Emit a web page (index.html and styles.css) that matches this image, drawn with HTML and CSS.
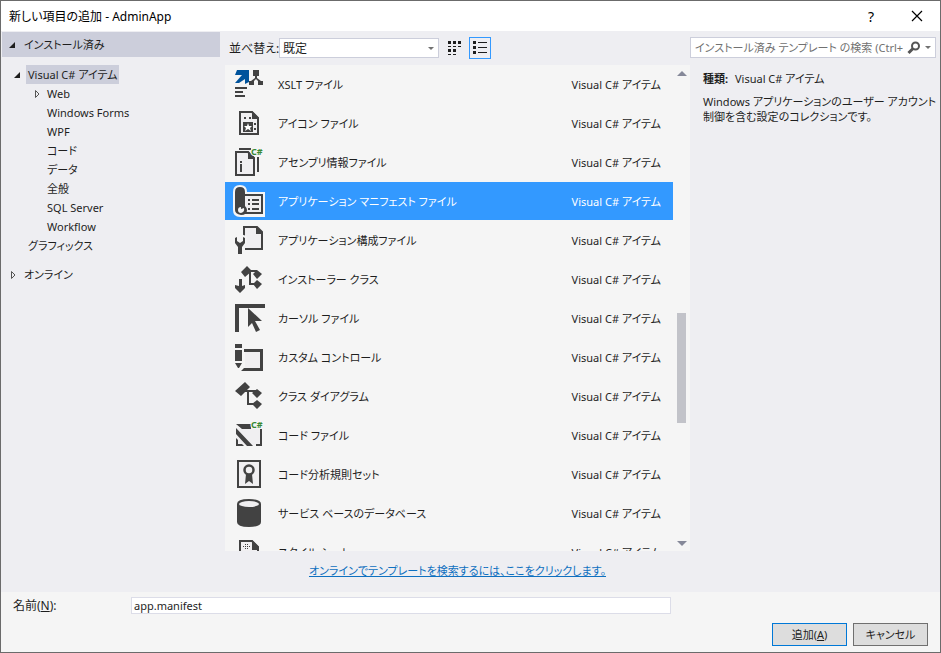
FILE: index.html
```html
<!DOCTYPE html>
<html lang="ja">

<head>
    <meta charset="UTF-8">
    <meta name="viewport" content="width=device-width, initial-scale=1.0">
    <title>新しい項目の追加 - AdminApp</title>
    <link rel="stylesheet" href="styles.css">
</head>

<body>
    <div class="dialog">
        <header class="titlebar">
            <h1>新しい項目の追加 - AdminApp</h1>
            <button type="button" class="title-btn" aria-label="ヘルプ">?</button>
            <button type="button" class="title-btn" aria-label="閉じる">
                <svg width="12" height="12" viewBox="0 0 12 12"><path d="M1 1l10 10M11 1L1 11" stroke="#000" stroke-width="1.2" fill="none"/></svg>
            </button>
        </header>

        <div class="main">
            <!-- Category tree -->
            <nav class="sidebar">
                <div class="group active">
                    <svg class="arrow" viewBox="0 0 8 8"><path d="M7 1v6H1z" fill="#1e1e1e"/></svg>
                    <span>インストール済み</span>
                </div>
                <ul class="tree">
                    <li class="level1">
                        <svg class="arrow" viewBox="0 0 8 8"><path d="M7 1v6H1z" fill="#1e1e1e"/></svg>
                        <span class="selected">Visual C# アイテム</span>
                    </li>
                    <li class="level2">
                        <svg class="arrow" viewBox="0 0 8 8"><path d="M3.5 0.5v7L7 4z" fill="none" stroke="#555"/></svg>
                        <span>Web</span>
                    </li>
                    <li class="level2"><span>Windows Forms</span></li>
                    <li class="level2"><span>WPF</span></li>
                    <li class="level2"><span>コード</span></li>
                    <li class="level2"><span>データ</span></li>
                    <li class="level2"><span>全般</span></li>
                    <li class="level2"><span>SQL Server</span></li>
                    <li class="level2"><span>Workflow</span></li>
                    <li class="level1"><span>グラフィックス</span></li>
                </ul>
                <div class="group">
                    <svg class="arrow" viewBox="0 0 8 8"><path d="M3.5 0.5v7L7 4z" fill="none" stroke="#555"/></svg>
                    <span>オンライン</span>
                </div>
            </nav>

            <!-- Templates -->
            <section class="templates">
                <div class="toolbar">
                    <label for="sort">並べ替え:</label>
                    <div class="select-box">
                        <select id="sort">
                            <option>既定</option>
                        </select>
                    </div>
                    <button type="button" class="view-btn" aria-label="小さいアイコン">
                        <svg width="14" height="14" viewBox="0 0 14 14" fill="#1e1e1e"><path d="M0 0h3v3H0zM5 0h3v3H5zM10 0h3v3h-3zM0 5h3v1H0zM5 5h3v1H5zM10 5h3v1h-3zM0 8h3v3H0zM5 8h3v3H5zM0 13h3v1H0zM5 13h3v1H5z"/></svg>
                    </button>
                    <button type="button" class="view-btn current" aria-label="一覧">
                        <svg width="14" height="14" viewBox="0 0 14 14" fill="#1e1e1e"><path d="M0 0h3v3H0zM0 5h3v3H0zM0 10h3v3H0zM5 1h9v1H5zM5 6h9v1H5zM5 11h9v1H5z"/></svg>
                    </button>
                </div>

                <div class="list-area">
                    <ul class="list">
                        <li>
                            <svg class="icon" viewBox="0 0 32 32">
                                <path d="M4 2h12v12l-4 2v-5l-6 4H2l7-8H2z" fill="#00539c"/>
                                <path d="M20 2h6v6h-2v2l4 3h2v4h-5v-4l-2-2-2 2v4h-5v-4h2l4-3V8h-2zM2 19h12v2H2zM2 23h8v2H2zM2 27h10v2H2z"/>
                            </svg>
                            <span class="name">XSLT ファイル</span>
                            <span class="kind">Visual C# アイテム</span>
                        </li>
                        <li>
                            <svg class="icon" viewBox="0 0 32 32">
                                <path d="M7 5h12l6 6v16H7z" fill="#f0eff1" stroke="#424242" stroke-width="2"/>
                                <path d="M19 4l7 7v1h-7zM11 10h2v2h-2zM16 10h2v2h-2zM10 15h10v10H10zM21 16h2v2h-2zM21 21h2v2h-2z"/>
                                <path d="M15 16l1 3h3l-2 2 1 3-3-2-3 2 1-3-2-2h3z" fill="#fff"/>
                            </svg>
                            <span class="name">アイコン ファイル</span>
                            <span class="kind">Visual C# アイテム</span>
                        </li>
                        <li>
                            <svg class="icon" viewBox="0 0 32 32">
                                <path d="M3 6h12l6 6v17H3z" fill="#f0eff1" stroke="#424242" stroke-width="2"/>
                                <path d="M15 5l7 7v1h-7zM7 15h2v2H7zM7 18h2v8H7zM6 2h12v2H6zM24 11h2v15h-2z"/>
                                <text x="18" y="9" class="cs">C#</text>
                            </svg>
                            <span class="name">アセンブリ情報ファイル</span>
                            <span class="kind">Visual C# アイテム</span>
                        </li>
                        <li class="selected">
                            <svg class="icon" viewBox="0 0 32 32">
                                <path d="M0 25V7Q0 0 7 0t7 7h18v25H7Q0 32 0 25z" fill="#f5f5f5"/>
                                <path d="M12 10h17v18H9" fill="#f0eff1" stroke="#424242" stroke-width="2"/>
                                <path d="M2 25V7q0-5 5-5t5 5v14q2 2 2 4 0 5-6 5-6-1-6-5z"/>
                                <path d="M5 25q0-3 3-3v2l3-1q1 4-3 5-3 0-3-3z" fill="#f5f5f5"/>
                                <path d="M15 14h2v2h-2zM19 14h7v2h-7zM15 18h2v2h-2zM19 18h7v2h-7zM15 23h2v2h-2zM19 23h7v2h-7z"/>
                            </svg>
                            <span class="name">アプリケーション マニフェスト ファイル</span>
                            <span class="kind">Visual C# アイテム</span>
                        </li>
                        <li>
                            <svg class="icon" viewBox="0 0 32 32">
                                <path d="M11 16V3h13l5 5v17H12" fill="#f0eff1" stroke="#424242" stroke-width="2"/>
                                <path d="M23 2l7 7v1h-7z"/>
                                <path d="M2 13l3-1v5l2 1 2-1v-5l3 1v6l-3 4v7H5v-7l-3-4z" stroke="#f5f5f5" stroke-width="3"/>
                                <path d="M2 14l2-1v4l3 2 3-2v-4l2 1v5l-3 4v7H5v-7l-3-4z"/>
                            </svg>
                            <span class="name">アプリケーション構成ファイル</span>
                            <span class="kind">Visual C# アイテム</span>
                        </li>
                        <li>
                            <svg class="icon" viewBox="0 0 32 32">
                                <path d="M14 3l5 5-7 6-4-5zM24 7l5 4-5 5-4-5zM24 17l5 4-5 5-4-5z"/>
                                <path d="M16 8h8M17 9v12h6" fill="none" stroke="#424242" stroke-width="2"/>
                                <path d="M6 16h3v7l3-1v3l-5 5-5-5v-3l4 1z"/>
                            </svg>
                            <span class="name">インストーラー クラス</span>
                            <span class="kind">Visual C# アイテム</span>
                        </li>
                        <li>
                            <svg class="icon" viewBox="0 0 32 32">
                                <path d="M2 2h30v4H6v24H2z"/>
                                <path d="M15 6l14 13h-7l5 9-4 2-4-9-4 4z"/>
                            </svg>
                            <span class="name">カーソル ファイル</span>
                            <span class="kind">Visual C# アイテム</span>
                        </li>
                        <li>
                            <svg class="icon" viewBox="0 0 32 32">
                                <path d="M12 9h16v19H12z" fill="#f0eff1"/>
                                <path d="M2 3h7v4H2zM2 9h7v11H2zM2 22h7l-3 5H5zM11 8h19v22H8l3-3h16V11H11z"/>
                            </svg>
                            <span class="name">カスタム コントロール</span>
                            <span class="kind">Visual C# アイテム</span>
                        </li>
                        <li>
                            <svg class="icon" viewBox="0 0 32 32">
                                <path d="M12 2l5 5-9 9-6-5zM24 9l5 4-5 5-5-5zM24 20l5 4-5 5-5-5z"/>
                                <path d="M12 11h11M15 11v13h6" fill="none" stroke="#424242" stroke-width="2"/>
                            </svg>
                            <span class="name">クラス ダイアグラム</span>
                            <span class="kind">Visual C# アイテム</span>
                        </li>
                        <li>
                            <svg class="icon" viewBox="0 0 32 32">
                                <path d="M4 9h24v17H4z" fill="#f0eff1"/>
                                <path d="M3 5h15v5H9zM3 9l17 18h-6L3 15zM3 19l2 2v4h4l2 2H3zM27 10h2v17h-6v-2h4z"/>
                                <text x="18" y="9" class="cs">C#</text>
                            </svg>
                            <span class="name">コード ファイル</span>
                            <span class="kind">Visual C# アイテム</span>
                        </li>
                        <li>
                            <svg class="icon" viewBox="0 0 32 32">
                                <path d="M5 3h22v26H5z" fill="#f0eff1" stroke="#424242" stroke-width="2"/>
                                <path d="M13 16h6l1 10-4-3-4 3z"/>
                                <circle cx="16" cy="12" r="4.5" fill="#f0eff1" stroke="#424242" stroke-width="2.5"/>
                            </svg>
                            <span class="name">コード分析規則セット</span>
                            <span class="kind">Visual C# アイテム</span>
                        </li>
                        <li>
                            <svg class="icon" viewBox="0 0 32 32">
                                <path d="M4 7q0-5 12-5t12 5v18q0 5-12 5T4 25z"/>
                                <ellipse cx="16" cy="7" rx="10" ry="3" fill="#f0eff1"/>
                            </svg>
                            <span class="name">サービス ベースのデータベース</span>
                            <span class="kind">Visual C# アイテム</span>
                        </li>
                        <li>
                            <svg class="icon" viewBox="0 0 32 32">
                                <path d="M7 5h12l6 6v16H7z" fill="#f0eff1" stroke="#424242" stroke-width="2"/>
                                <path d="M19 4l7 7v3h-7zM10 10h1v1h-1zM12 10h1v1h-1zM14 10h1v1h-1zM16 10h1v1h-1zM12 8h1v1h-1zM14 8h1v1h-1zM12 12h1v1h-1zM14 12h1v1h-1z"/>
                            </svg>
                            <span class="name">スタイル シート</span>
                            <span class="kind">Visual C# アイテム</span>
                        </li>
                    </ul>
                    <div class="scrollbar">
                        <div class="up"></div>
                        <div class="before"></div>
                        <div class="thumb"></div>
                        <div class="after"></div>
                        <div class="down"></div>
                    </div>
                </div>

                <p class="online"><a href="#">オンラインでテンプレートを検索するには、ここをクリックします。</a></p>
            </section>

            <!-- Details -->
            <aside class="details">
                <div class="search">
                    <input type="text" aria-label="検索" placeholder="インストール済み テンプレート の検索 (Ctrl+E)">
                    <button type="button" aria-label="検索">
                        <svg width="14" height="14" viewBox="0 0 14 14"><circle cx="8.5" cy="5" r="3.5" fill="none" stroke="#555" stroke-width="2"/><path d="M6 7.5L1.5 12" stroke="#555" stroke-width="3"/></svg>
                    </button>
                    <button type="button" aria-label="検索オプション">
                        <svg width="6" height="4" viewBox="0 0 6 4"><path d="M0 0h6L3 3z" fill="#717171"/></svg>
                    </button>
                </div>
                <div class="info">
                    <p><b>種類:</b> Visual C# アイテム</p>
                    <p class="text">Windows アプリケーションのユーザー アカウント<br>制御を含む設定のコレクションです。</p>
                </div>
            </aside>
        </div>

        <footer class="footer">
            <div class="name-row">
                <label for="name">名前(<u>N</u>):</label>
                <input type="text" id="name" value="app.manifest">
            </div>
            <div class="buttons">
                <button type="button" class="default">追加(<u>A</u>)</button>
                <button type="button">キャンセル</button>
            </div>
        </footer>
    </div>
</body>

</html>
```
FILE: styles.css
```css
* {
    margin: 0;
    padding: 0;
    box-sizing: border-box;
}

body {
    font-family: "Noto Sans", "Noto Sans CJK JP", sans-serif;
    font-size: 11px;
    line-height: 19px;
    font-feature-settings: "palt";
    color: #1e1e1e;
}

button,
input,
select {
    font: inherit;
    font-feature-settings: inherit;
    color: inherit;
}

ul {
    list-style: none;
}

.dialog {
    display: flex;
    flex-direction: column;
    height: 100vh;
    border: 1px solid #6b6b6b;
    background: #eeeef2;
}

/* Title bar */
.titlebar {
    display: flex;
    align-items: center;
    height: 30px;
    padding-left: 8px;
    background: #fff;
    color: #000;
}

.titlebar h1 {
    flex: 1;
    font-size: 12px;
    font-weight: normal;
}

.title-btn {
    width: 46px;
    height: 30px;
    border: none;
    background: none;
    font-size: 14px;
}

.main {
    display: grid;
    grid-template-columns: 219px 1fr 250px;
    grid-template-rows: minmax(0, 1fr);
    flex: 1;
    min-height: 0;
}

/* Sidebar */
.sidebar {
    padding: 1px 0 0 1px;
}

.group {
    display: flex;
    align-items: center;
    gap: 8px;
    height: 25px;
    padding-left: 6px;
}

.group.active {
    background: #cccedb;
}

.arrow {
    flex: none;
    width: 8px;
    height: 8px;
}

.tree {
    padding: 8px 0 7px;
}

.tree li {
    display: flex;
    align-items: center;
    height: 19px;
    padding-left: 24px;
}

.tree span {
    padding: 0 2px;
    white-space: nowrap;
}

.tree .level2 {
    padding-left: 43px;
}

/* Arrows hang in the indent */
.tree .arrow {
    margin-left: -13px;
    margin-right: 5px;
}

.tree .selected {
    background: #cccedb;
}

/* Template list */
.templates {
    display: flex;
    flex-direction: column;
    min-width: 0;
    padding-left: 5px;
}

.toolbar {
    display: flex;
    align-items: center;
    height: 34px;
    padding-left: 4px;
    font-size: 12px;
}

.toolbar label {
    width: 50px;
    white-space: nowrap;
}

.select-box {
    display: flex;
    align-items: center;
    width: 160px;
    margin-right: 5px;
    border: 1px solid #cccedb;
    background: #fff;
}

.select-box select {
    flex: 1;
    height: 18px;
    padding: 0 3px;
    border: none;
    background: none;
    appearance: none;
}

.select-box::after {
    content: "";
    margin-right: 4px;
    border: 3px solid transparent;
    border-top-color: #717171;
    border-bottom: none;
}

.view-btn {
    display: flex;
    align-items: center;
    justify-content: center;
    width: 22px;
    height: 22px;
    margin-right: 3px;
    border: 1px solid transparent;
    background: none;
}

.view-btn.current {
    border-color: #3399ff;
}

.list-area {
    display: flex;
    flex: 1;
    min-height: 0;
    background: #f5f5f5;
}

.list {
    flex: 1;
    overflow: hidden;
}

.list li {
    display: flex;
    align-items: center;
    height: 38px;
    margin-bottom: 1px;
    padding: 0 12px 0 8px;
}

.list .selected {
    background: #3399ff;
    color: #fff;
}

.icon {
    flex: none;
    width: 32px;
    height: 32px;
    margin-right: 13px;
    overflow: visible;
    fill: #424242;
}

.cs {
    font: bold 9px "Noto Sans", sans-serif;
    fill: #388a34;
    stroke: #f5f5f5;
    stroke-width: 2px;
    paint-order: stroke;
}

.name {
    flex: 1;
    white-space: nowrap;
}

.kind {
    white-space: nowrap;
}

.scrollbar {
    display: flex;
    flex-direction: column;
    align-items: center;
    width: 17px;
    padding: 6px 0 5px;
}

.up,
.down {
    border: 5px solid transparent;
}

.up {
    border-top: none;
    border-bottom-color: #868999;
}

.down {
    border-bottom: none;
    border-top-color: #868999;
}

.before {
    flex: 2;
}

.thumb {
    width: 9px;
    height: 110px;
    background: #c2c3c9;
}

.after {
    flex: 1;
}

.online {
    height: 41px;
    padding-top: 10px;
    text-align: center;
}

.online a {
    color: #0e70c0;
}

/* Details */
.details {
    padding: 6px 4px 0 0;
}

.search {
    display: flex;
    align-items: center;
    height: 21px;
    padding: 0 4px;
    border: 1px solid #cccedb;
    background: #fff;
}

.search input {
    flex: 1;
    min-width: 0;
    height: 19px;
    border: none;
    outline: none;
    background: none;
}

.search input::placeholder {
    color: #717171;
}

.search button {
    display: flex;
    align-items: center;
    margin-left: 4px;
    border: none;
    background: none;
}

.info {
    padding: 11px 0 0 13px;
}

.info b {
    margin-right: 4px;
}

.info .text {
    margin-top: 6px;
    line-height: 15px;
    white-space: nowrap;
}

/* Footer */
.footer {
    padding: 4px 12px 6px;
    background: #f5f5f5;
}

.name-row {
    display: flex;
    align-items: center;
}

.name-row label {
    width: 118px;
    font-size: 12px;
}

.name-row input {
    width: 59%;
    height: 17px;
    padding: 0 2px;
    border: 1px solid #dcdde8;
    background: #fff;
}

.buttons {
    display: flex;
    justify-content: flex-end;
    gap: 6px;
    margin-top: 8px;
}

.buttons button {
    width: 75px;
    height: 23px;
    border: 1px solid #707070;
    background: #ddd;
}

.buttons .default {
    border-color: #0078d7;
}
```
